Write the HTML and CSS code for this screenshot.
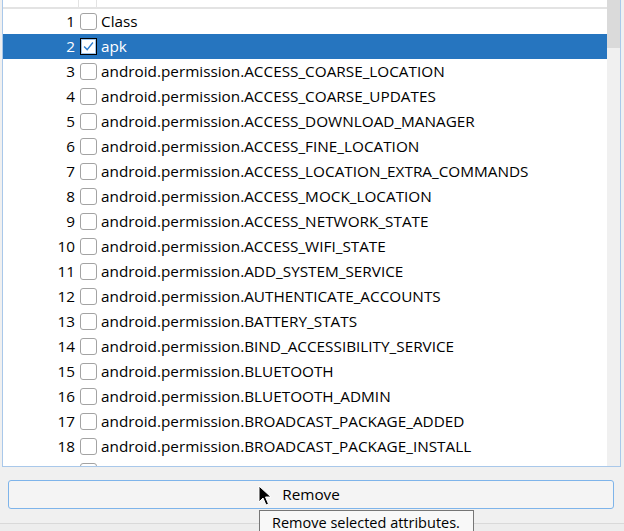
FILE: index.html
```html
<!DOCTYPE html>
<html>
<head>
<meta charset="utf-8">
<link rel="stylesheet" href="styles.css">
</head>
<body>
<div class="window">
  <div class="list">
    <div class="content">
      <div class="header">
        <div class="hcol hnum"></div>
        <div class="hcol hchk"></div>
        <div class="hcol hname"></div>
      </div>
      <div class="rows">
        <div class="row"><span class="num">1</span><span class="chk"></span><span class="name">Class</span></div>
        <div class="row selected"><span class="num">2</span><span class="chk checked"><svg viewBox="0 0 17 17" width="15" height="15"><path d="M3.5 8.5 L7 12 L13.5 4" fill="none" stroke="#2f7fd0" stroke-width="1.6"/></svg></span><span class="name">apk</span></div>
        <div class="row"><span class="num">3</span><span class="chk"></span><span class="name">android.permission.ACCESS_COARSE_LOCATION</span></div>
        <div class="row"><span class="num">4</span><span class="chk"></span><span class="name">android.permission.ACCESS_COARSE_UPDATES</span></div>
        <div class="row"><span class="num">5</span><span class="chk"></span><span class="name">android.permission.ACCESS_DOWNLOAD_MANAGER</span></div>
        <div class="row"><span class="num">6</span><span class="chk"></span><span class="name">android.permission.ACCESS_FINE_LOCATION</span></div>
        <div class="row"><span class="num">7</span><span class="chk"></span><span class="name">android.permission.ACCESS_LOCATION_EXTRA_COMMANDS</span></div>
        <div class="row"><span class="num">8</span><span class="chk"></span><span class="name">android.permission.ACCESS_MOCK_LOCATION</span></div>
        <div class="row"><span class="num">9</span><span class="chk"></span><span class="name">android.permission.ACCESS_NETWORK_STATE</span></div>
        <div class="row"><span class="num">10</span><span class="chk"></span><span class="name">android.permission.ACCESS_WIFI_STATE</span></div>
        <div class="row"><span class="num">11</span><span class="chk"></span><span class="name">android.permission.ADD_SYSTEM_SERVICE</span></div>
        <div class="row"><span class="num">12</span><span class="chk"></span><span class="name">android.permission.AUTHENTICATE_ACCOUNTS</span></div>
        <div class="row"><span class="num">13</span><span class="chk"></span><span class="name">android.permission.BATTERY_STATS</span></div>
        <div class="row"><span class="num">14</span><span class="chk"></span><span class="name">android.permission.BIND_ACCESSIBILITY_SERVICE</span></div>
        <div class="row"><span class="num">15</span><span class="chk"></span><span class="name">android.permission.BLUETOOTH</span></div>
        <div class="row"><span class="num">16</span><span class="chk"></span><span class="name">android.permission.BLUETOOTH_ADMIN</span></div>
        <div class="row"><span class="num">17</span><span class="chk"></span><span class="name">android.permission.BROADCAST_PACKAGE_ADDED</span></div>
        <div class="row"><span class="num">18</span><span class="chk"></span><span class="name">android.permission.BROADCAST_PACKAGE_INSTALL</span></div>
        <div class="row"><span class="num">19</span><span class="chk"></span><span class="name">android.permission.BROADCAST_PACKAGE_REMOVED</span></div>
      </div>
    </div>
    <div class="scrollbar"><div class="thumb"></div></div>
  </div>
  <div class="actions">
    <button class="btn">Remove</button>
  </div>
  <div class="status"></div>
  <svg class="cursor" width="14" height="22" viewBox="0 0 14 22"><path d="M1 1 L1 17 L5 13 L8 20 L10.5 19 L7.5 12 L13 12 Z" fill="#000" stroke="#fff" stroke-width="1"/></svg>
  <div class="tooltip">Remove selected attributes.</div>
</div>
</body>
</html>
```
FILE: styles.css
```css
html, body {
  margin: 0;
  padding: 0;
}
body {
  background: #f0f0f0;
  font-family: "Open Sans", "Noto Sans", sans-serif;
  font-size: 15.3px;
  color: #000;
}
.window {
  position: relative;
  width: 624px;
  height: 531px;
  overflow: hidden;
}
.list {
  margin-left: 2px;
  width: 617px;
  height: 466px;
  border-left: 1px solid #a9c8ea;
  border-right: 1px solid #a9c8ea;
  border-bottom: 1px solid #a9c8ea;
  background: #fff;
  display: flex;
  overflow: hidden;
}
.content {
  flex: 1;
  overflow: hidden;
}
.header {
  display: flex;
  height: 7px;
  border-bottom: 2px solid #e3e3e3;
}
.hcol {
  height: 100%;
}
.hnum { width: 75px; border-right: 1px solid #e3e3e3; }
.hchk { width: 17px; border-right: 1px solid #e3e3e3; }
.hname { flex: 1; }
.rows {
  display: flex;
  flex-direction: column;
}
.row {
  display: flex;
  align-items: center;
  height: 25px;
  white-space: nowrap;
}
.row.selected {
  background: #2675bf;
  color: #fff;
}
.num {
  width: 72px;
  text-align: right;
  padding-right: 5px;
  padding-bottom: 2px;
}
.chk {
  width: 15px;
  height: 15px;
  border: 1px solid #a3a3a3;
  border-radius: 3px;
  background: #fff;
  box-sizing: content-box;
  display: flex;
  align-items: center;
  justify-content: center;
}
.chk.checked {
  border: 1px solid #000;
  border-radius: 0;
  box-shadow: inset 0 0 0 1px #9cc3ea;
}
.name {
  margin-left: 4px;
  padding-bottom: 2px;
}
.scrollbar {
  width: 13px;
  background: #f0f0f0;
}
.thumb {
  height: 48px;
  background: #dadada;
}
.actions {
  padding: 13px 10px 0 8px;
}
.btn {
  display: block;
  width: 606px;
  height: 29px;
  border: 1px solid #7eb4ea;
  border-radius: 3px;
  background: #f4f4f4;
  font-family: inherit;
  font-size: 15.3px;
  color: #000;
  padding: 0 0 2px;
}
.status {
  margin-top: 14px;
  border-top: 1px solid #d9d9d9;
  height: 8px;
  background: #ededed;
}
.cursor {
  position: absolute;
  left: 258px;
  top: 485px;
}
.tooltip {
  position: absolute;
  left: 259px;
  top: 510px;
  width: 201px;
  height: 30px;
  padding-left: 12px;
  border: 1px solid #767676;
  background: #f8f8f8;
  font-size: 14.5px;
  line-height: 24px;
  white-space: nowrap;
}
```
